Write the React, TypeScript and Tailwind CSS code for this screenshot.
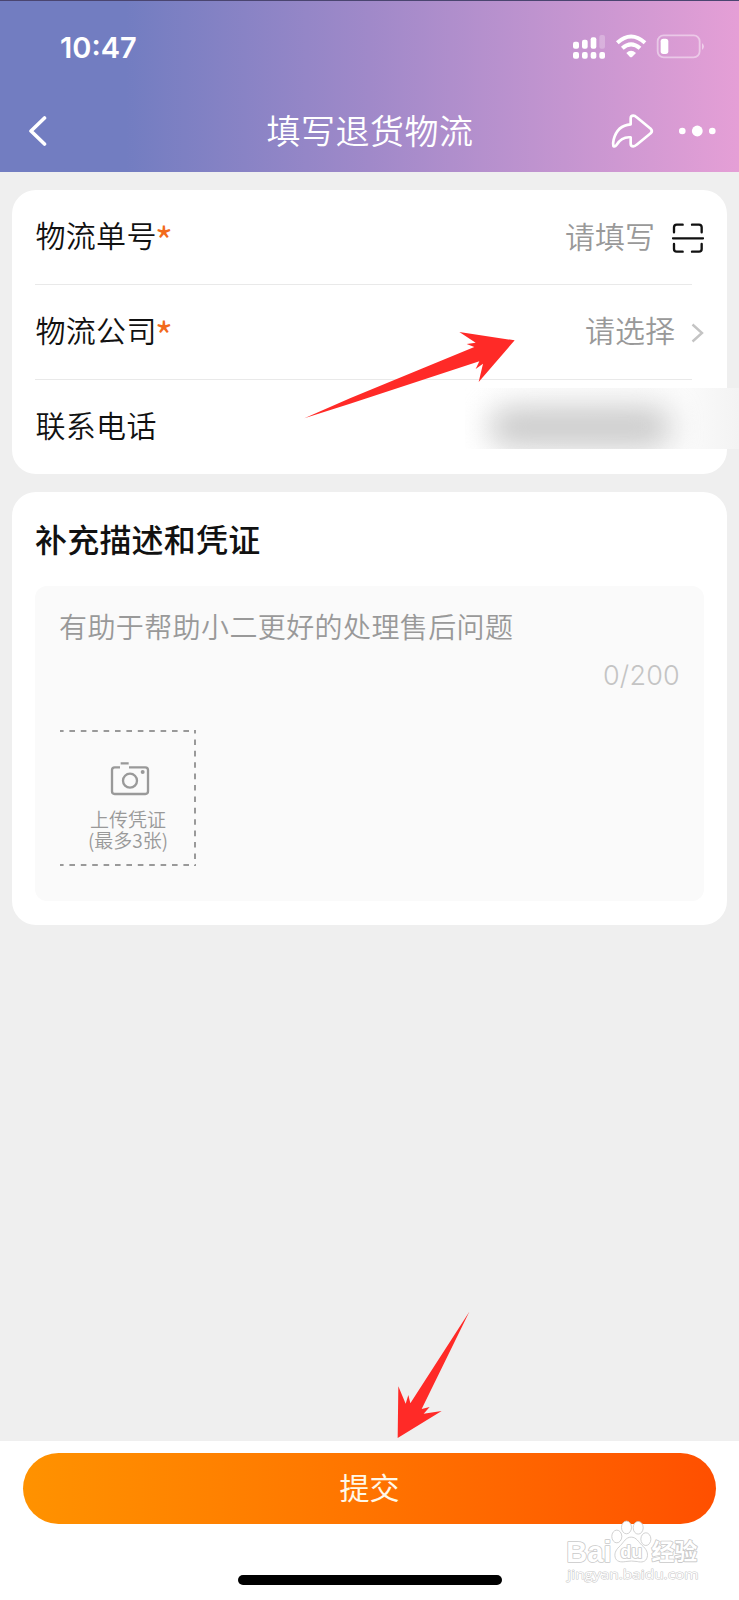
import type { ReactNode } from 'react';

interface FormRowProps {
  label: string;
  required?: boolean;
  divider?: boolean;
  children?: ReactNode;
}

function FormRow({ label, required = false, divider = true, children }: FormRowProps) {
  return (
    <div className="relative flex h-[95px] items-center justify-between pr-[23px] pl-[23.5px]">
      <div className="flex items-center text-[30px] leading-[44px] font-[350] tracking-[0.3px] text-[#111]">
        <span className="pb-[8px]">{label}</span>
        {required && <span className="-ml-[2px] pt-[5px] text-[40px] text-[#f26a1b]">*</span>}
      </div>
      {children}
      {divider && <div className="absolute right-[35px] bottom-0 left-[23px] h-px bg-[#e9e9e9]"></div>}
    </div>
  );
}

function StatusIcons() {
  return (
    <svg className="h-[28.33px] w-[136.67px]" viewBox="600 100 410 85" fill="#fff">
      <rect x="609" y="126" width="18" height="21" rx="6" />
      <rect x="636" y="120" width="17" height="27" rx="6" />
      <rect x="662" y="113" width="17" height="34" rx="6" />
      <rect x="688" y="106" width="17" height="41" rx="6" opacity="0.25" />
      <rect x="609" y="157" width="18" height="20" rx="6" />
      <rect x="636" y="157" width="17" height="20" rx="6" />
      <rect x="662" y="157" width="17" height="20" rx="6" />
      <rect x="688" y="157" width="17" height="20" rx="6" />
      {/* wifi */}
      <path d="M742 129Q783 92 825 129" fill="none" stroke="#fff" strokeWidth="12" />
      <path d="M757 146Q783 122 810 146" fill="none" stroke="#fff" strokeWidth="12" />
      <path d="M769 160Q783 147 798 160L786 172Q783 174 780 172Z" />
      {/* battery */}
      <rect x="863" y="107" width="126" height="66" rx="18" fill="none" stroke="#fff" strokeWidth="5.5" opacity="0.45" />
      <rect x="872" y="117" width="23" height="46" rx="8" />
      <path d="M996 130Q1008 140 996 151Z" opacity="0.5" />
    </svg>
  );
}

function ShareIcon() {
  return (
    <svg className="h-9 w-11" viewBox="724 338 132 108" fill="none" stroke="#fff" strokeWidth="8" strokeLinejoin="round">
      <path d="M783 372V354Q783 346 791 346Q796 346 801 351L843 385Q850 392 843 399L801 433Q796 438 791 438Q783 438 783 430V411C765 409 752 416 741 433Q736 440 731 437Q729 430 732 418C739 390 756 374 783 372Z" />
    </svg>
  );
}

function CameraIcon() {
  return (
    <svg className="h-[36px] w-[40px]" viewBox="330 843 120 108" fill="none" stroke="#999" strokeWidth="7">
      <path d="M360 862H344Q336 862 336 870V934Q336 942 344 942H436Q444 942 444 934V870Q444 862 436 862H387M362 850H386" />
      <circle cx="390" cy="902" r="21" />
      <circle cx="428" cy="876" r="6" fill="#999" stroke="none" />
    </svg>
  );
}

// dashed outline of the upload slot, open on the left side
function DashedOutline() {
  return (
    <svg className="absolute inset-0 h-[136px] w-[136px]" viewBox="0 0 136 136" fill="none" stroke="#999" strokeWidth="2" strokeDasharray="5.6 5.8" strokeDashoffset="2">
      <path d="M0 1H136" />
      <path d="M135 0V136" />
      <path d="M0 135H136" />
    </svg>
  );
}

function Watermark() {
  return (
    <svg
      className="absolute top-[1518px] left-[563px] h-[67px] w-[137px]"
      viewBox="580 685 410 200"
      fill="#fff"
      stroke="#c9c9c9"
      strokeWidth="2.5"
      fontFamily="'Liberation Sans', 'Noto Sans CJK SC', sans-serif"
    >
      <ellipse cx="741" cy="740" rx="15" ry="19" />
      <ellipse cx="770" cy="713" rx="15" ry="19" />
      <ellipse cx="805" cy="714" rx="15" ry="19" />
      <ellipse cx="828" cy="748" rx="15" ry="19" />
      <path d="M784 742C800 742 806 757 816 766C830 778 835 789 832 802C828 817 815 818 802 815Q784 812 768 815C752 818 739 815 736 802C733 788 740 778 752 767C762 757 768 742 784 742Z" />
      <g paintOrder="stroke" strokeWidth="5" strokeLinejoin="round">
        <text x="590" y="815" fontSize="90" fontWeight="700" textLength="135" lengthAdjust="spacingAndGlyphs">Bai</text>
        <text x="751" y="805" fontSize="54" fontWeight="700" textLength="66" lengthAdjust="spacingAndGlyphs">du</text>
        <text x="845" y="810" fontSize="68" fontWeight="700" textLength="137" lengthAdjust="spacingAndGlyphs">经验</text>
        <text x="593" y="866" fontSize="40" strokeWidth="3" fontFamily="'Open Sans', sans-serif" textLength="393" lengthAdjust="spacingAndGlyphs">jingyan.baidu.com</text>
      </g>
    </svg>
  );
}

export default function App() {
  return (
    <div className="relative flex h-[1600px] w-[739px] flex-col overflow-hidden bg-[#efefef] font-['Noto_Sans_CJK_SC',sans-serif]">
      {/* Header */}
      <header className="h-[172px] border-t border-[#4a4570] bg-linear-to-r from-[#727dc1] from-17% via-[#a089c9] via-50% to-[#e59fd6] text-white">
        <div className="flex h-[93px] items-center justify-between pr-[32px] pl-[60px]">
          <span className="font-['Inter',sans-serif] text-[29px] font-semibold">10:47</span>
          <StatusIcons />
        </div>
        <div className="grid h-[74px] grid-cols-[1fr_auto_1fr] items-center pr-[23px] pl-[27px]">
          <svg className="h-[32px] w-[20px]" viewBox="0 0 20 32" fill="none" stroke="#fff" strokeWidth="3.6" strokeLinecap="round" strokeLinejoin="round">
            <path d="M17.5 3L4 16L17.5 29" />
          </svg>
          <h1 className="pr-[3px] pb-[2px] text-[34px] leading-[50px] font-[350] tracking-[0.5px]">填写退货物流</h1>
          <div className="flex items-center justify-end gap-[24px]">
            <ShareIcon />
            <svg className="h-[12px] w-[37px]" viewBox="0 0 37 12" fill="#fff">
              <circle cx="3.3" cy="6" r="3.3" />
              <circle cx="18.3" cy="6" r="5.4" />
              <circle cx="33.3" cy="6" r="3.3" />
            </svg>
          </div>
        </div>
      </header>

      <main className="flex flex-1 flex-col gap-[18px] px-3 pt-[18px]">
        {/* Logistics info */}
        <section className="h-[284px] rounded-[24px] bg-white">
          <FormRow label="物流单号" required>
            <div className="flex items-center gap-[17px]">
              <span className="pb-[6px] text-[30px] leading-[44px] font-[350] text-[#999]">请填写</span>
              <svg className="h-[30px] w-[32px]" viewBox="906 127 96 90" fill="none" stroke="#111" strokeWidth="7" strokeLinecap="round">
                <path d="M912 155V140Q912 132 920 132H938M966 132H987Q995 132 995 140V155M912 190V205Q912 213 920 213H938M966 213H987Q995 213 995 205V190M909 173H999" />
              </svg>
            </div>
          </FormRow>
          <FormRow label="物流公司" required>
            <div className="flex items-center gap-[16px]">
              <span className="pb-[8px] text-[30px] leading-[44px] font-[350] text-[#999]">请选择</span>
              <svg className="h-[20px] w-[13px]" viewBox="0 0 13 20" fill="none" stroke="#c4c4c4" strokeWidth="2.4">
                <path d="M1.5 1.5L11 10L1.5 18.5" />
              </svg>
            </div>
          </FormRow>
          <FormRow label="联系电话" divider={false} />
        </section>

        {/* Description and evidence */}
        <section className="h-[433px] rounded-[24px] bg-white px-[23px] pt-[22px]">
          <h2 className="text-[32px] leading-[48px] font-medium tracking-[0.2px] text-[#111]">补充描述和凭证</h2>
          <div className="mt-[24px] flex h-[315px] flex-col rounded-xl bg-[#fafafa] pt-[20px] pr-[24px] pl-[25px]">
            <p className="-ml-px text-[28px] leading-[40px] font-[350] tracking-[0.4px] text-[#999]">有助于帮助小二更好的处理售后问题</p>
            <p className="mt-[10px] text-right font-['Inter',sans-serif] text-[27px] leading-[40px] font-light tracking-[0.2px] text-[#c4c4c4]">0/200</p>
            <div className="relative mt-[34px] flex h-[136px] w-[136px] flex-col items-center pt-[31px] pl-[3px]">
              <DashedOutline />
              <CameraIcon />
              <div className="mt-[11px] -ml-[3px] text-center text-[19px] leading-[21px] font-[350] whitespace-nowrap text-[#999]">
                上传凭证
                <br />
                (最多3张)
              </div>
            </div>
          </div>
        </section>
      </main>

      {/* Submit bar */}
      <footer className="flex h-[159px] flex-col items-center bg-white px-[23px] pt-[12px]">
        <button className="h-[71px] w-full rounded-full bg-linear-to-r from-[#ff9200] to-[#ff4f00] pb-[5px] text-[30px] leading-[44px] font-normal text-[#fff8e8]">提交</button>
        <div className="mt-[51px] h-[10px] w-[264px] rounded-full bg-black"></div>
      </footer>

      {/* Masked phone number */}
      <div className="absolute top-[388px] left-[465px] h-[61px] w-[274px] overflow-hidden bg-linear-to-r from-white via-[#fbfbfb] via-80% to-[#f3f3f3]">
        <div className="absolute top-[19px] left-[24px] h-[40px] w-[182px] rounded-full bg-[#cacaca] blur-[15px]"></div>
      </div>

      {/* Pointer arrows */}
      <svg className="absolute top-[310px] left-[290px] h-[120px] w-[240px]" viewBox="0 0 720 360" fill="#ff2a27">
        <path d="M43 325L180 265L553 111L530 102L557 98L508 66L674 91L566 216L579 161L557 177L568 154L180 281Z" />
      </svg>
      <svg className="absolute top-[1300px] left-[390px] h-[145px] w-[60px] overflow-visible" viewBox="60 30 180 435" fill="#ff2a27">
        <path d="M298 65L121 340L115 315L107 341L85 289L83 444L215 363L161 371L179 351L155 357Z" />
      </svg>

      <Watermark />
    </div>
  );
}
